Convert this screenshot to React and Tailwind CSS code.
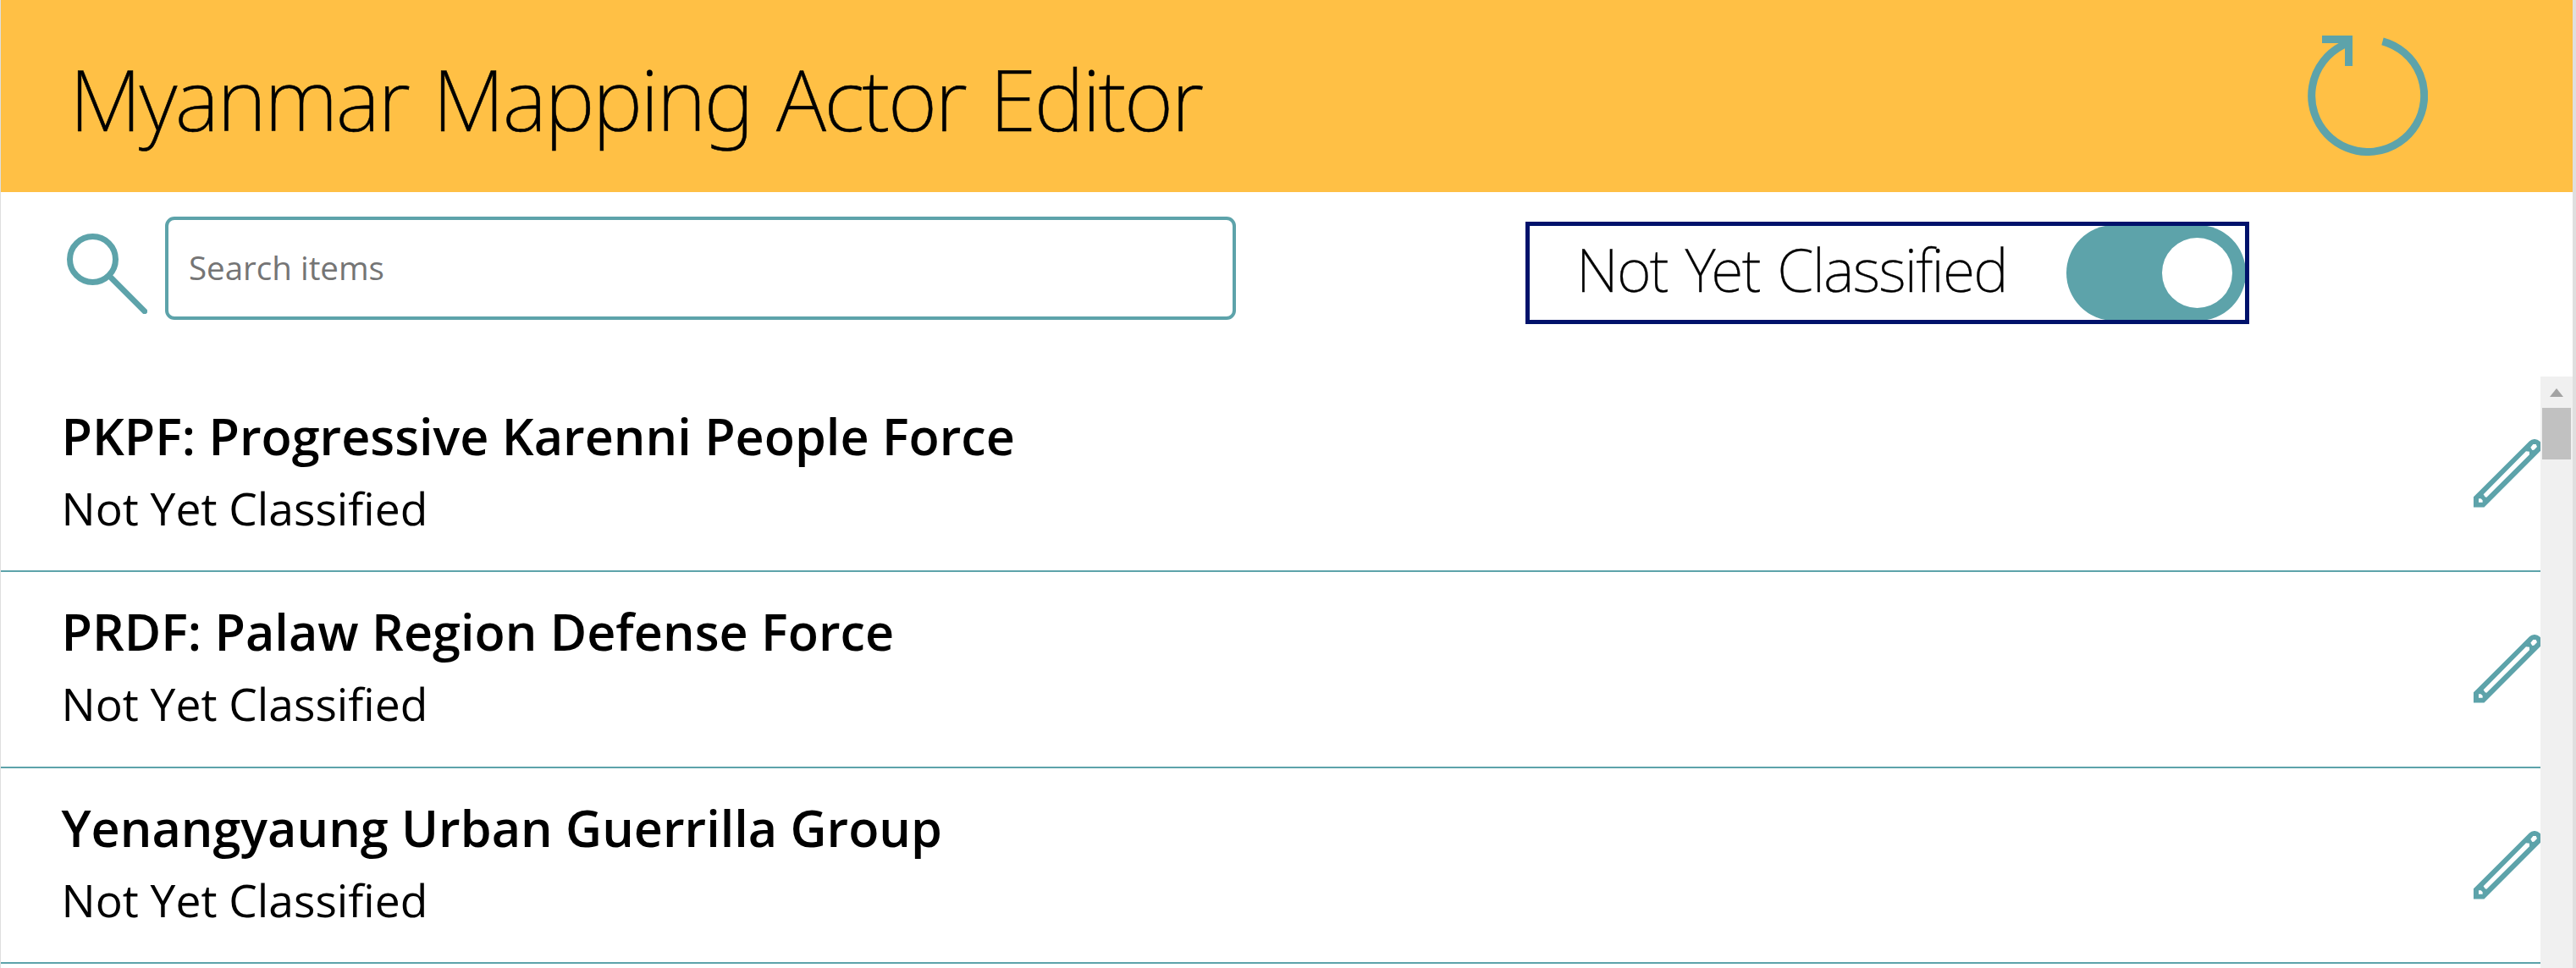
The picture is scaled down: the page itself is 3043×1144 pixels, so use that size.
const actors = [
  { name: "PKPF: Progressive Karenni People Force", status: "Not Yet Classified" },
  { name: "PRDF: Palaw Region Defense Force", status: "Not Yet Classified" },
  { name: "Yenangyaung Urban Guerrilla Group", status: "Not Yet Classified" },
];

function ReloadIcon() {
  return (
    <svg className="h-[142px] w-[142px] shrink-0" viewBox="0 0 142 142" fill="none" stroke="#5da3aa" strokeWidth="9" aria-hidden="true">
      <path d="M88.5 6.8A66.5 66.5 0 1 1 40.5 12L48 8" />
      <path d="M17 4.5H48.5V36" />
    </svg>
  );
}

function SearchIcon() {
  return (
    <svg className="h-[95px] w-[95px] shrink-0" viewBox="0 0 95 95" fill="none" stroke="#5da3aa" aria-hidden="true">
      <circle cx="30.5" cy="30.5" r="27" strokeWidth="7" />
      <path d="M50.5 50.5 91.8 91.8" strokeWidth="6.8" strokeLinecap="round" />
    </svg>
  );
}

function PencilIcon() {
  return (
    <svg className="mt-[74px] h-[81px] w-[79px] shrink-0" viewBox="36 27 237 243" fill="#5da3aa" fillRule="evenodd" aria-hidden="true">
      <path d="M36 268.5V232L233.6 34.6A26 26 0 0 1 270.4 71.4L73.5 268.5ZM54 238H62L68 244V251H54ZM71 223 222 70 234 71V82L82 233 77 232ZM238 56 247 45H257L261 54 250 65 244 66Z" />
    </svg>
  );
}

function Toggle() {
  return (
    <div className="-mr-px flex h-[113px] w-[212px] shrink-0 items-center justify-end rounded-full bg-[#5da3aa] pr-4">
      <div className="size-[83px] rounded-full bg-white" />
    </div>
  );
}

function ActorRow({ name, status }) {
  return (
    <li className="flex h-[231.33px] justify-between border-b-[2.5px] border-[#5da3aa] pl-[71.5px]">
      <div className="pt-[30px]">
        <h2 className="text-[59.3px] leading-[80px] font-semibold">{name}</h2>
        <p className="mt-[10px] text-[53.35px] leading-[72px]">{status}</p>
      </div>
      <PencilIcon />
    </li>
  );
}

export default function App() {
  return (
    <div className="flex h-[1144px] w-[3043px] flex-col overflow-hidden border-r-4 border-l border-[#dfdfdf] bg-white font-['Open_Sans',sans-serif] text-black">
      <header className="flex h-[227px] shrink-0 items-start justify-between bg-[#ffc045] pr-[171px] pl-[81px]">
        <h1 className="mt-[66px] font-['Noto_Sans',sans-serif] text-[100px] leading-[100px] font-extralight tracking-[-2.4px] [word-spacing:5px] [-webkit-text-stroke:0.6px_#000]">
          Myanmar Mapping Actor Editor
        </h1>
        <div className="mt-[42px]">
          <ReloadIcon />
        </div>
      </header>

      <div className="flex h-[218px] shrink-0 items-start pl-[78px]">
        <div className="mt-[49px]">
          <SearchIcon />
        </div>
        <input
          className="mt-[29px] ml-[21px] h-[122px] w-[1265px] rounded-[11px] border-4 border-[#5da3aa] pb-[2px] pl-[24px] text-[38.5px] placeholder:text-[#757575]"
          placeholder="Search items"
        />
        <div className="mt-[35px] ml-[342px] flex h-[121px] w-[855px] items-center justify-between overflow-hidden border-[5px] border-[#00126b] pl-[55px]">
          <span className="pb-[9px] font-['Noto_Sans',sans-serif] text-[70px] leading-[90px] font-extralight tracking-[-1.8px] whitespace-nowrap [word-spacing:4px] [-webkit-text-stroke:0.3px_#000]">
            Not Yet Classified
          </span>
          <Toggle />
        </div>
      </div>

      <div className="flex min-h-0 flex-1">
        <ul className="min-w-0 flex-1 overflow-hidden">
          {actors.map((actor) => (
            <ActorRow key={actor.name} {...actor} />
          ))}
        </ul>
        <div className="flex w-[38px] shrink-0 flex-col items-center bg-[#f0f0f0]">
          <div className="flex h-[37px] items-center pt-[1px]">
            <svg className="h-[10px] w-[16px]" viewBox="0 0 16 10" fill="#a3a3a3" aria-hidden="true">
              <path d="M8 0 16 10H0Z" />
            </svg>
          </div>
          <div className="h-[61px] w-[34px] bg-[#c1c1c1]" />
        </div>
      </div>
    </div>
  );
}
